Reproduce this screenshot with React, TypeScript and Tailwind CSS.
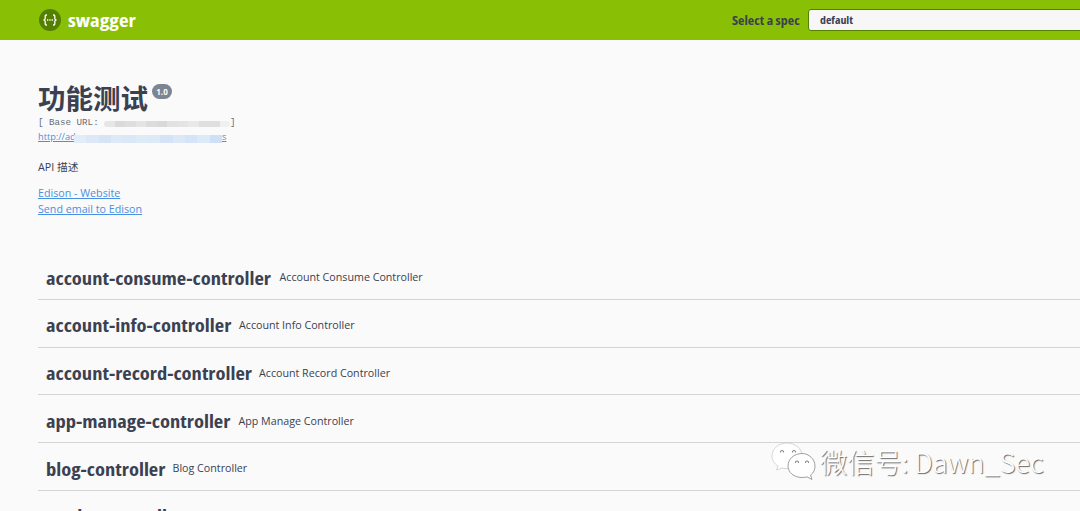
const T = "font-['Open_Sans','Noto_Sans_CJK_SC',sans-serif]";
const D = "font-['Open_Sans','Noto_Sans_CJK_SC',sans-serif] font-bold [font-stretch:75%] origin-left";
const rows = [
  { name: "account-consume-controller", desc: "Account Consume Controller", w: "w-[226px]" },
  { name: "account-info-controller", desc: "Account Info Controller", w: "w-[185.5px]" },
  { name: "account-record-controller", desc: "Account Record Controller", w: "w-[205.5px]" },
  { name: "app-manage-controller", desc: "App Manage Controller", w: "w-[185px]" },
  { name: "blog-controller", desc: "Blog Controller", w: "w-[119px]" },
  { name: "reader-controller", desc: "", w: "w-[140px]" },
];

const blurBase = ["bg-[#e6e6e6]", "bg-[#dadada]", "bg-[#dedede]", "bg-[#e4e4e4]", "bg-[#dcdcdc]", "bg-[#d9d9d9]", "bg-[#e2e2e2]", "bg-[#e4e4e4]", "bg-[#e9e9e9]", "bg-[#dfdfdf]", "bg-[#dfdfe2]", "bg-[#f0f0f0]"];
const blurLink = ["bg-[#e3edf8]", "bg-[#dce8f6]", "bg-[#d6e4f5]", "bg-[#dde9f6]", "bg-[#d9e7f6]", "bg-[#dfeaf7]", "bg-[#dce9f7]", "bg-[#d4e4f6]", "bg-[#dce8f6]", "bg-[#d5e5f7]", "bg-[#dce9f6]", "bg-[#cfe0f4]"];

export default function App() {
  return (
    <div className={`relative h-[511px] w-[1080px] overflow-hidden bg-[#fafafa] text-[#3b4151] ${T}`}>
      <header className="flex h-[40px] items-center bg-[#89bf04] pl-[39px]">
        <svg className="shrink-0" width="22" height="22" viewBox="0 0 22 22" fill="none" stroke="#fff" strokeWidth="1.3">
          <circle cx="11" cy="11" r="11" fill="#547f00" stroke="none" />
          <path d="M8 6H7.2Q6.2 6 6.2 7.100V9.500Q6.200 11 4.500 11Q6.200 11 6.200 12.500V14.900Q6.200 16 7.200 16H8M14 6h.8q1 0 1 1.100v2.400q0 1.500 1.700 1.500q-1.700 0-1.700 1.500v2.400q0 1.100-1 1.100H14" />
          <path d="M8 11h1.300M10.300 11h1.300M12.600 11h1.300" />
        </svg>
        <span className={`ml-[7px] w-[640px] shrink-0 scale-x-[1.160] pt-[1px] text-[18px] text-white ${D}`}>swagger</span>
        <span className={`ml-[24px] w-[69px] shrink-0 scale-x-[1.160] pt-[2px] text-[12px] whitespace-nowrap ${D}`}>Select a spec</span>
        <div className="ml-[7px] flex h-[22px] w-[300px] shrink-0 items-center rounded-[3px] border-[1.5px] border-[#547f00] bg-[#f7f7f7] pl-[11px] text-[11px]">
          <span className={`scale-x-[1.080] pt-[1px] ${D}`}>default</span>
        </div>
      </header>

      <main className="pl-[38px]">
        <section className="flex h-[212px] flex-col pt-[39px]">
          <h1 className="flex h-[37px] items-start font-['Noto_Sans_CJK_SC',sans-serif] text-[27.5px] leading-[36px] font-bold">
            功能测试
            <span className="mt-[5px] ml-[4px] h-[15px] w-[20px] rounded-full bg-[#7d8492] text-center font-['Open_Sans',sans-serif] text-[8px] leading-[15px] text-white">1.0</span>
          </h1>
          <div className="flex h-[13px] items-center font-['Liberation_Mono',monospace] text-[9.2px] whitespace-pre text-[#3b4151]/80">
            <span className="w-[66px]">[ Base URL: </span>
            <span className="mt-[3px] flex h-[6px] w-[126px] overflow-hidden rounded-full">
              {blurBase.map((c, i) => <i key={i} className={`flex-1 ${c}`} />)}
            </span>
            <span>]</span>
          </div>
          <div className="flex h-[16px] items-center text-[9.2px] text-[#4990e2] underline">
            <span className="w-[36px]">http://ad</span>
            <span className="mt-[3px] flex h-[8px] w-[148px]">
              {blurLink.map((c, i) => <i key={i} className={`flex-1 ${c}`} />)}
            </span>
            <span>s</span>
          </div>
          <p className="mt-[14px] h-[16px] text-[10.700px] leading-[16px]">API 描述</p>
          <a className="mt-[10px] h-[16px] text-[10.700px] leading-[16px] text-[#4990e2] underline">Edison - Website</a>
          <a className="h-[16px] text-[10.700px] leading-[17px] text-[#4990e2] underline">Send email to Edison</a>
        </section>
        {rows.map((r) => (
          <div key={r.name} className="flex h-[47.750px] items-center border-b border-[#d3d4d6] pt-[3px] pl-[7.5px]">
            <div className={`shrink-0 pt-[1px] text-[18.500px] whitespace-nowrap ${r.w}`}>
              <span className={`inline-block scale-x-[1.108] ${D}`}>{r.name}</span>
            </div>
            <span className="ml-[8px] pt-[1px] text-[10.700px]">{r.desc}</span>
          </div>
        ))}
      </main>

      <div className="absolute top-[440px] left-[770px] flex items-center">
        <svg className="shrink-0" width="48" height="42" viewBox="0 0 48 42" fill="#fff" stroke="#aaa" strokeWidth=".8">
          <path stroke="#ccc" d="M17 3C9 3 2 8.500 2 16C2 20 4 23.500 8 26L6.500 30L12 28Q15 29 18 28.500C29 28 32 23 32 16C32 8.500 25 3 17 3Z" />
          <path stroke="#888" d="M32 13.500C24 13.500 18 19 18 26C18 32.500 24 37.500 32 37.500Q35 37.500 37 36.800L42 39.500L40.500 35C44 32.500 45 29.500 45 26C45 19.500 39 13.500 32 13.500Z" />
          <path fill="none" stroke="#888" strokeWidth="1.100" d="M10.500 12.500v-1q1.500-2 3 0v1M22.500 12.500v-1q1.500-2 3 0v1M25.500 23v-1q1.500-2 3 0v1M35.500 23v-1q1.500-2 3 0v1" />
        </svg>
        <span className="ml-[2px] font-['Noto_Sans_CJK_SC',sans-serif] text-[27.200px] leading-[42px] font-light whitespace-nowrap text-white [text-shadow:1px_1px_1px_#666]">微信号: Dawn_Sec</span>
      </div>
    </div>
  );
}
